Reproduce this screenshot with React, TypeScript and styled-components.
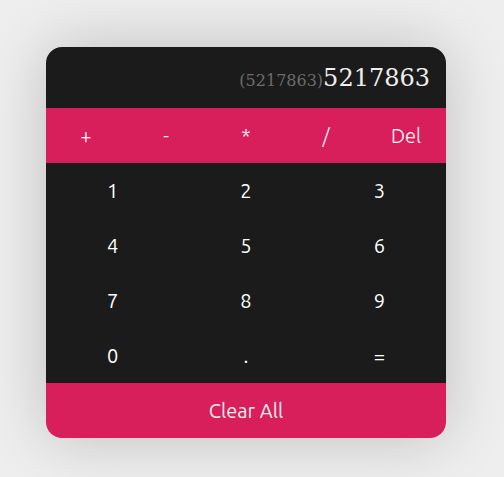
import React, { useState } from "react";
import styled, { createGlobalStyle } from "styled-components";

const GlobalStyle = createGlobalStyle`
  * { box-sizing: border-box; }
  body {
    margin: 0;
    background: #eee;
  }
`;

const Page = styled.main`
  display: flex;
  justify-content: center;
  align-items: center;
  min-height: 100vh;
  padding: 24px 28px 16px 16px;
`;

const Calculator = styled.section`
  width: 100%;
  max-width: 400px;
  border-radius: 16px;
  box-shadow: 0 0 64px rgba(0, 0, 0, 0.2);
`;

const Display = styled.output`
  display: flex;
  justify-content: flex-end;
  align-items: baseline;
  padding: 17px 16px 15px;
  border-radius: 16px 16px 0 0;
  background: #1b1b1b;
  color: #eee;
  font: 24px/29px "DejaVu Serif", serif;
`;

const Preview = styled.span`
  color: #6b6b6b;
  font-size: 16px;
  line-height: 19px;
`;

const Row = styled.div<{ $columns: number }>`
  display: grid;
  grid-template-columns: repeat(${(p) => p.$columns}, 1fr);
`;

const Key = styled.button`
  height: 55px;
  padding: 0;
  border: 0;
  color: #fff;
  background: #1b1b1b;
  font: 400 20px/24px Ubuntu, "Noto Sans", sans-serif;
  cursor: pointer;
`;

const OperatorKey = styled(Key)`
  background: #d81e5b;
  font-weight: 300;
`;

const ClearKey = styled(Key)`
  border-radius: 0 0 16px 16px;
  background: #d81e5b;
  color: #eee;
`;

const operators = ["+", "-", "*", "/"];
const digits = ["1", "2", "3", "4", "5", "6", "7", "8", "9", "0", "."];

function calculate(expression: string): string {
  const tokens = expression.match(/\d+\.?\d*|\.\d+|[+\-*/]/g) || [];
  const terms: number[] = [];
  let operator = "+";
  for (const token of tokens) {
    if (operators.includes(token)) {
      operator = token;
      continue;
    }
    const value = Number(token);
    if (operator === "*") terms.push((terms.pop() ?? 0) * value);
    else if (operator === "/") terms.push((terms.pop() ?? 0) / value);
    else terms.push(operator === "-" ? -value : value);
  }
  return String(terms.reduce((sum, term) => sum + term, 0));
}

export default function App() {
  const [expression, setExpression] = useState("5217863");
  const append = (value: string) => setExpression((current) => current + value);

  return (
    <>
      <GlobalStyle />
      <Page>
        <Calculator aria-label="Calculator">
          <Display>
            {expression && <Preview>({calculate(expression)})</Preview>}
            {expression || "0"}
          </Display>
          <Row $columns={5}>
            {operators.map((op) => (
              <OperatorKey key={op} onClick={() => append(op)}>{op}</OperatorKey>
            ))}
            <OperatorKey onClick={() => setExpression((s) => s.slice(0, -1))}>Del</OperatorKey>
          </Row>
          <Row $columns={3}>
            {digits.map((digit) => (
              <Key key={digit} onClick={() => append(digit)}>{digit}</Key>
            ))}
            <Key onClick={() => setExpression(calculate(expression))}>=</Key>
          </Row>
          <Row $columns={1}>
            <ClearKey onClick={() => setExpression("")}>Clear All</ClearKey>
          </Row>
        </Calculator>
      </Page>
    </>
  );
}
